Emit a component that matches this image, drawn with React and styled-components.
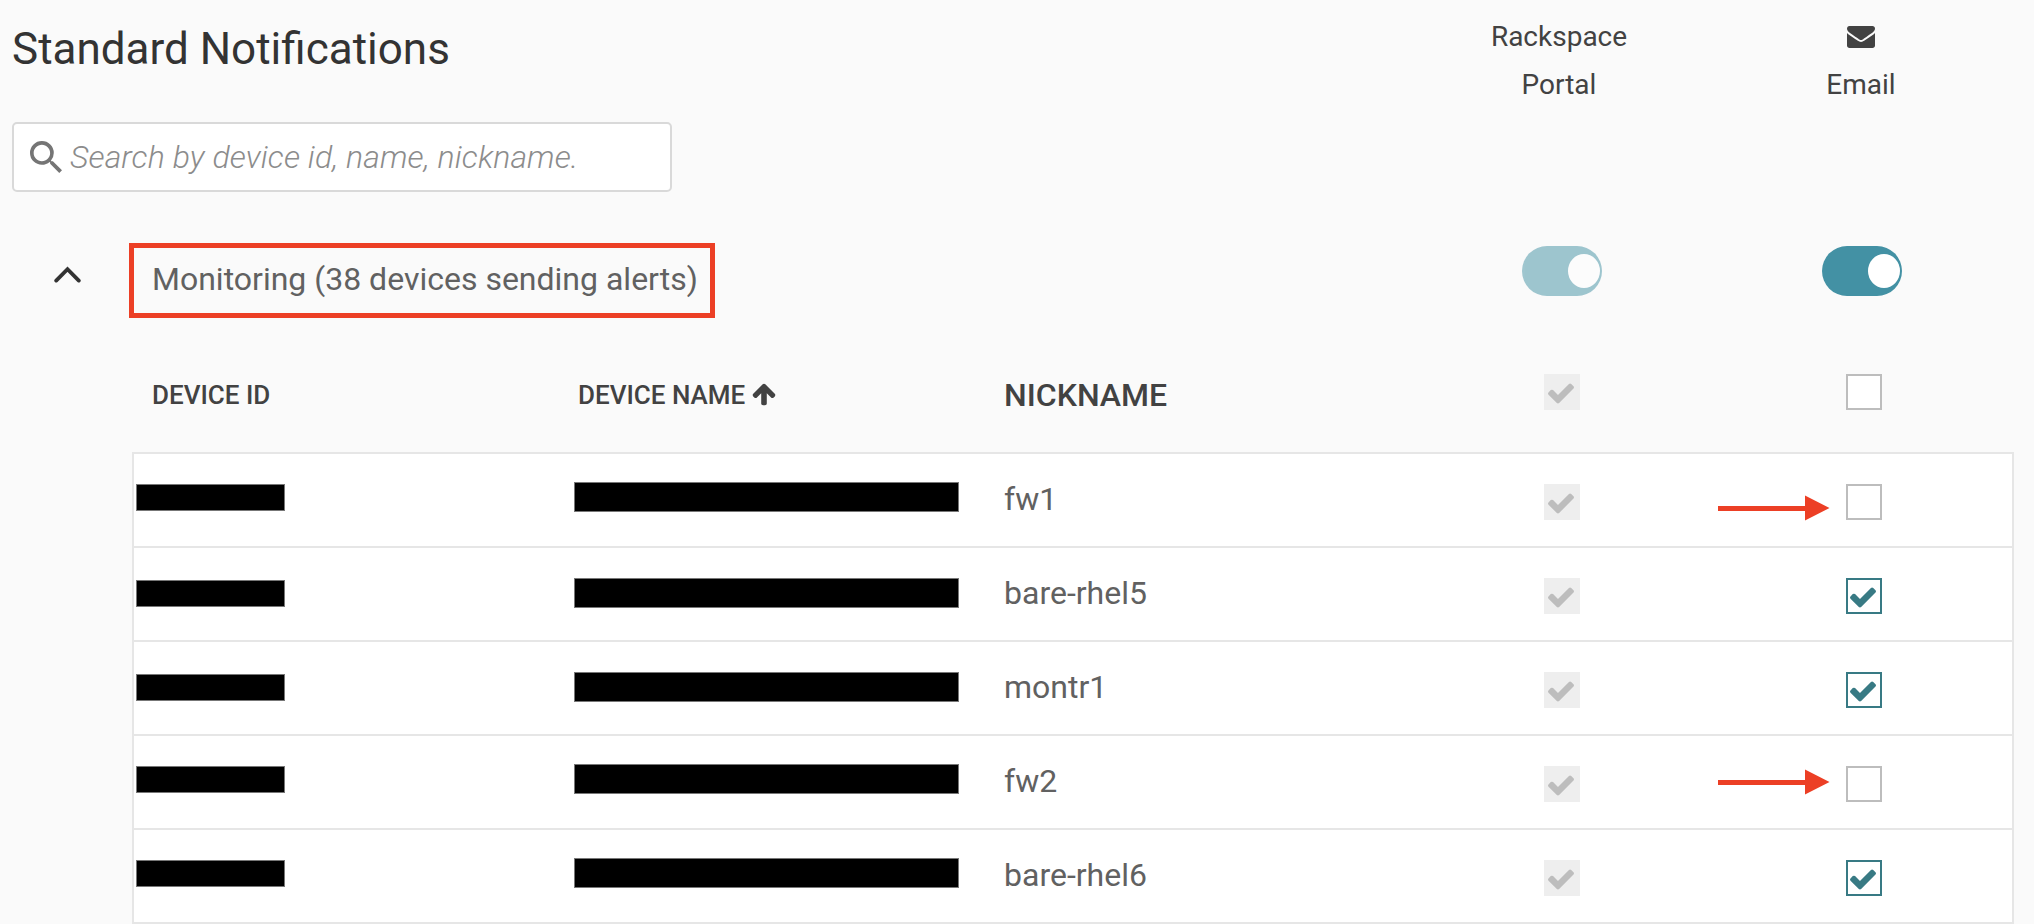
import React from "react";
import styled, { createGlobalStyle, css } from "styled-components";

const GlobalStyle = createGlobalStyle`
  *, *::before, *::after { box-sizing: border-box; }
  body {
    margin: 0;
    background: #fafafa;
    font-family: Roboto, "Liberation Sans", sans-serif;
    color: #616161;
    overflow: hidden;
  }
`;

const Page = styled.main`
  width: 2034px;
  height: 924px;
  overflow: hidden;
  background: #fafafa;
`;

const columns = css`
  display: grid;
  grid-template-columns: 426px 426px 540px 302px 1fr;
`;

const TopBar = styled.header`
  display: grid;
  grid-template-columns: 1408px 302px 302px;
  height: 232px;
`;

const Intro = styled.div`
  padding: 23px 0 0 12px;
`;

const Title = styled.h1`
  margin: 0 0 47px;
  font-size: 44px;
  line-height: 52px;
  font-weight: 400;
  color: #333;
`;

const SearchBox = styled.label`
  display: flex;
  align-items: center;
  width: 660px;
  height: 70px;
  padding-left: 16px;
  background: #fff;
  border: 2px solid #d9d9d9;
  border-radius: 5px;
`;

const SearchInput = styled.input`
  flex: 1;
  margin-left: 8px;
  padding: 0;
  border: 0;
  outline: 0;
  background: transparent;
  font: italic 300 32px/40px Roboto, "Liberation Sans", sans-serif;
  letter-spacing: 0.09px;
  &::placeholder { color: #8c8c8c; opacity: 1; }
`;

const Channel = styled.div`
  display: flex;
  flex-direction: column;
  align-items: center;
  padding-top: 13px;
  font-size: 28px;
  line-height: 48px;
  color: #424242;
`;

const IconLine = styled.span`
  display: flex;
  align-items: center;
  height: 48px;
  padding-bottom: 2px;
`;

const Group = styled.section`
  display: grid;
  grid-template-columns: 129px 1393px 300px 80px;
  align-items: start;
  height: 142px;
`;

const Collapse = styled.button`
  display: flex;
  padding: 34px 0 0 54px;
  border: 0;
  background: none;
`;

const GroupTitle = styled.h2`
  width: 586px;
  height: 75px;
  margin: 11px 0 0;
  padding-left: 18px;
  border: 5px solid #ec3f25;
  font-size: 32px;
  line-height: 62px;
  font-weight: 400;
  white-space: nowrap;
`;

const Toggle = styled.button`
  display: flex;
  justify-content: flex-end;
  width: 80px;
  height: 50px;
  margin: 14px 0 0;
  padding: 8px 2px;
  border: 0;
  border-radius: 25px;
  background: #4391a4;
  opacity: ${(p) => (p.disabled ? 0.5 : 1)};
`;

const Knob = styled.span`
  width: 32px;
  height: 34px;
  border-radius: 50%;
  background: #fff;
`;

const HeaderRow = styled.div`
  ${columns}
  margin-left: 152px;
  height: 78px;
`;

const HeaderCell = styled.div`
  display: flex;
  align-items: flex-start;
  padding-top: ${(p) => (p.$large ? "1px" : "3px")};
  font-size: ${(p) => (p.$large ? 32 : 26)}px;
  line-height: ${(p) => (p.$large ? 40 : 36)}px;
  font-weight: 500;
  color: #424242;
`;

const Table = styled.div`
  width: 1882px;
  margin-left: 132px;
  border: solid #e6e6e6;
  border-width: 2px 2px 0;
  background: #fff;
`;

const Row = styled.div`
  ${columns}
  height: 94px;
  padding-left: 18px;
  border-bottom: 2px solid #e6e6e6;
`;

const Cell = styled.div`
  padding-top: 25px;
  font-size: 32px;
  line-height: 40px;
`;

const CheckCell = styled.div`
  position: relative;
  padding-top: ${(p) => (p.$header ? 0 : 30)}px;
`;

const Redaction = styled.div`
  width: ${(p) => (p.$wide ? 385 : 149)}px;
  height: ${(p) => (p.$wide ? 30 : 27)}px;
  margin-top: ${(p) => p.$top}px;
  margin-left: ${(p) => (p.$wide ? -4 : -16)}px;
  border: 1px solid #777;
  background: #000;
`;

const Box = styled.span`
  display: flex;
  width: 36px;
  height: 36px;
  border: 2px solid
    ${(p) => (p.$disabled ? "#eee" : p.$checked ? "#387a84" : "#bdbdbd")};
  background: ${(p) => (p.$disabled ? "#eee" : "#fff")};
  color: ${(p) => (p.$disabled ? "#bdbdbd" : "#387a84")};
`;

const Pointer = styled.svg`
  position: absolute;
  left: -128px;
  top: ${(p) => p.$top}px;
`;

const SortIcon = styled.svg`
  margin: 4px 0 0 6px;
`;

const Mark = styled.svg`
  margin-top: 1.5px;
`;

const CheckIcon = () => (
  <Mark width="30" height="30" viewBox="0 0 1792 1792" fill="currentColor">
    <path d="M1671 566q0 40-28 68l-724 724-136 136q-28 28-68 28t-68-28l-136-136-362-362q-28-28-28-68t28-68l136-136q28-28 68-28t68 28l294 295 656-657q28-28 68-28t68 28l136 136q28 28 28 68z" />
  </Mark>
);

const Checkbox = ({ checked, disabled }) => (
  <Box role="checkbox" aria-checked={!!checked} $checked={checked} $disabled={disabled}>
    {checked && <CheckIcon />}
  </Box>
);

const devices = [
  { nickname: "fw1", email: false, shift: 0, nameShift: 0, pointer: 41 },
  { nickname: "bare-rhel5", email: true, shift: 2, nameShift: 2 },
  { nickname: "montr1", email: true, shift: 2, nameShift: 2 },
  { nickname: "fw2", email: false, shift: 0, nameShift: 0, pointer: 33 },
  { nickname: "bare-rhel6", email: true, shift: 0, nameShift: 0 },
];

export default function App() {
  return (
    <Page>
      <GlobalStyle />
      <TopBar>
        <Intro>
          <Title>Standard Notifications</Title>
          <SearchBox>
            <svg width="32" height="32" viewBox="3 3 17.49 17.49" fill="#757575">
              <path d="M15.5 14h-.79l-.28-.27A6.471 6.471 0 0 0 16 9.5 6.5 6.5 0 1 0 9.5 16c1.61 0 3.09-.59 4.23-1.57l.27.28v.79l5 4.99L20.49 19l-4.99-5zm-6 0C7.01 14 5 11.99 5 9.5S7.01 5 9.5 5 14 7.01 14 9.5 11.99 14 9.5 14z" />
            </svg>
            <SearchInput placeholder="Search by device id, name, nickname." />
          </SearchBox>
        </Intro>
        <Channel>
          <span>Rackspace</span>
          <span>Portal</span>
        </Channel>
        <Channel>
          <IconLine>
            <svg width="28" height="28" viewBox="0 0 1792 1792" fill="#424242">
              <path d="M1792 710v794q0 66-47 113t-113 47h-1472q-66 0-113-47t-47-113v-794q44 49 101 87 362 246 497 345 57 42 92.5 65.5t94.5 48 110 24.5h2q51 0 110-24.5t94.5-48 92.5-65.5q170-123 498-345 57-39 100-87zm0-294q0 79-49 151t-122 123q-376 261-468 325-10 7-42.5 31t-54 38.5-52 32.5-57.5 27-50 9h-2q-23 0-50-9t-57.5-27-52-32.5-54-38.5-42.5-31q-91-64-262-182.5t-205-142.5q-62-42-117-115.5t-55-136.5q0-78 41.5-130t118.5-52h1472q65 0 112.5 47t47.5 113z" />
            </svg>
          </IconLine>
          <span>Email</span>
        </Channel>
      </TopBar>

      <Group>
        <Collapse aria-label="Collapse">
          <svg
            width="27"
            height="17"
            viewBox="0 0 27 17"
            fill="none"
            stroke="#333"
            strokeWidth="3.8"
            strokeLinecap="round"
          >
            <path d="M2.2 14.6 13.5 3.2 24.8 14.6" />
          </svg>
        </Collapse>
        <GroupTitle>Monitoring (38 devices sending alerts)</GroupTitle>
        <Toggle disabled><Knob /></Toggle>
        <Toggle><Knob /></Toggle>
      </Group>

      <HeaderRow>
        <HeaderCell>DEVICE ID</HeaderCell>
        <HeaderCell>
          DEVICE NAME
          <SortIcon width="26" height="26" viewBox="0 0 1792 1792" fill="#424242">
            <path d="M1675 971q0 51-37 90l-75 75q-38 38-91 38-54 0-90-38l-294-293v704q0 52-37.5 84.5t-90.5 32.5h-128q-53 0-90.5-32.5t-37.5-84.5v-704l-294 293q-36 38-90 38t-90-38l-75-75q-38-38-38-90 0-53 38-91l651-651q35-37 90-37 54 0 91 37l651 651q37 39 37 91z" />
          </SortIcon>
        </HeaderCell>
        <HeaderCell $large>NICKNAME</HeaderCell>
        <CheckCell $header><Checkbox checked disabled /></CheckCell>
        <CheckCell $header><Checkbox /></CheckCell>
      </HeaderRow>

      <Table>
        {devices.map((d) => (
          <Row key={d.nickname}>
            <div><Redaction $top={30 + d.shift} /></div>
            <div><Redaction $wide $top={28 + d.nameShift} /></div>
            <Cell>{d.nickname}</Cell>
            <CheckCell><Checkbox checked disabled /></CheckCell>
            <CheckCell>
              <Checkbox checked={d.email} />
              {d.pointer && (
                <Pointer $top={d.pointer} width="112" height="26" viewBox="0 0 112 26" fill="#ec3f25">
                  <path d="M0 11h87V.5L111.5 13 87 25.5V16H0z" />
                </Pointer>
              )}
            </CheckCell>
          </Row>
        ))}
      </Table>
    </Page>
  );
}
